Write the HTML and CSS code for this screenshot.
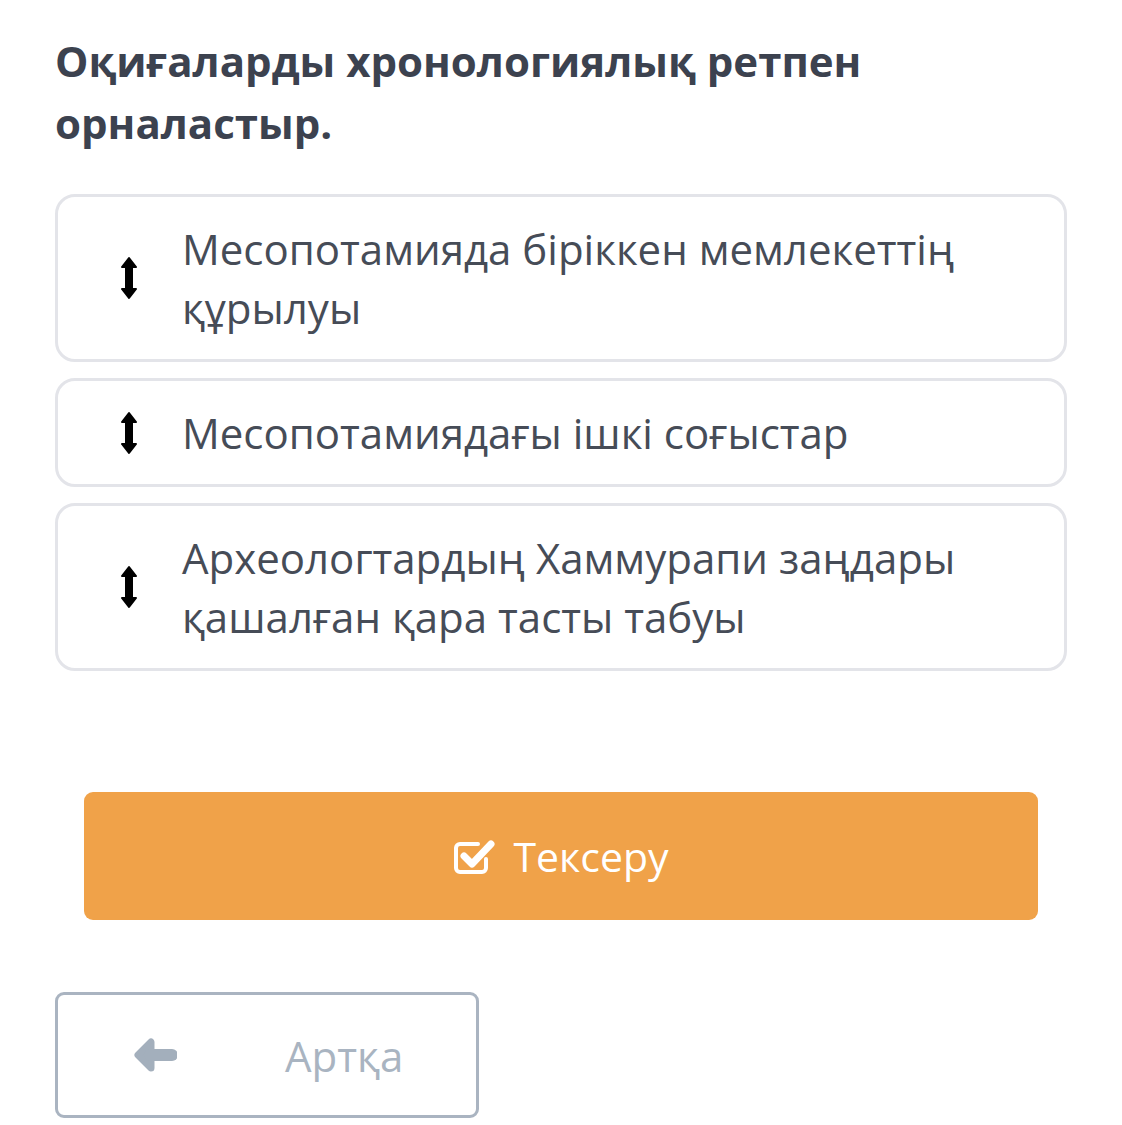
FILE: index.html
```html
<!DOCTYPE html>
<html lang="kk">
<head>
    <meta charset="UTF-8">
    <meta name="viewport" content="width=device-width, initial-scale=1.0">
    <title>Оқиғаларды ретпен орналастыр</title>
    <link rel="stylesheet" href="styles.css">
</head>
<body>
    <div class="container">
        <h1 class="question">Оқиғаларды хронологиялық ретпен орналастыр.</h1>

        <div class="sort-list">
            <div class="sort-item">
                <span class="handle">
                    <svg viewBox="0 0 16 44" width="16" height="44"><path d="M8 2 L15 11 H11 V33 H15 L8 42 L1 33 H5 V11 H1 Z" fill="#000" stroke="#000" stroke-width="2" stroke-linejoin="round"/></svg>
                </span>
                <span class="item-text">Месопотамияда біріккен мемлекеттің құрылуы</span>
            </div>
            <div class="sort-item">
                <span class="handle">
                    <svg viewBox="0 0 16 44" width="16" height="44"><path d="M8 2 L15 11 H11 V33 H15 L8 42 L1 33 H5 V11 H1 Z" fill="#000" stroke="#000" stroke-width="2" stroke-linejoin="round"/></svg>
                </span>
                <span class="item-text">Месопотамиядағы ішкі соғыстар</span>
            </div>
            <div class="sort-item">
                <span class="handle">
                    <svg viewBox="0 0 16 44" width="16" height="44"><path d="M8 2 L15 11 H11 V33 H15 L8 42 L1 33 H5 V11 H1 Z" fill="#000" stroke="#000" stroke-width="2" stroke-linejoin="round"/></svg>
                </span>
                <span class="item-text">Археологтардың Хаммурапи заңдары қашалған қара тасты табуы</span>
            </div>
        </div>

        <button class="btn-check">
            <svg viewBox="0 0 42 38" width="42" height="38">
                <path d="M33 22 V31 a4 4 0 0 1 -4 4 H7 a4 4 0 0 1 -4 -4 V11 a4 4 0 0 1 4 -4 H25" fill="none" stroke="#fff" stroke-width="4" stroke-linecap="round"/>
                <path d="M11 19 L19 27 L38 7" fill="none" stroke="#fff" stroke-width="7" stroke-linecap="round" stroke-linejoin="round"/>
            </svg>
            <span>Тексеру</span>
        </button>

        <button class="btn-back">
            <svg viewBox="0 0 44 36" width="44" height="36">
                <path d="M5 18 L18 5 L18 31 Z" fill="#a3afbc" stroke="#a3afbc" stroke-width="7" stroke-linejoin="round"/>
                <path d="M17 18 H39" stroke="#a3afbc" stroke-width="12" stroke-linecap="round"/>
            </svg>
            <span>Артқа</span>
        </button>
    </div>
</body>
</html>
```

FILE: styles.css
```css
body {
    margin: 0;
    background: #fff;
    font-family: "Open Sans", "Noto Sans", sans-serif;
}
.container {
    padding: 30px 55px 0;
}
.question {
    margin: 0 0 40px;
    font-size: 42px;
    line-height: 62px;
    font-weight: 700;
    color: #3c424f;
    max-width: 880px;
}
.sort-list {
    display: flex;
    flex-direction: column;
    gap: 16px;
}
.sort-item {
    display: flex;
    align-items: center;
    border: 3px solid #e3e4e9;
    border-radius: 20px;
    padding: 22px 40px 22px 0;
}
.handle {
    width: 124px;
    flex-shrink: 0;
    display: flex;
    justify-content: center;
    padding-left: 18px;
    box-sizing: border-box;
}
.handle svg {
    display: block;
}
.item-text {
    font-size: 42px;
    line-height: 59px;
    color: #464c57;
}
.btn-check {
    display: flex;
    align-items: center;
    justify-content: center;
    gap: 18px;
    width: 954px;
    height: 128px;
    margin: 121px 0 0 29px;
    border: none;
    border-radius: 9px;
    background: #f0a249;
    color: #fff;
    font-family: inherit;
    font-size: 41px;
    cursor: pointer;
}
.btn-check svg,
.btn-back svg {
    display: block;
}
.btn-back {
    display: flex;
    align-items: center;
    width: 424px;
    height: 126px;
    margin-top: 72px;
    padding: 0 0 0 75px;
    gap: 108px;
    border: 3px solid #aab4c1;
    border-radius: 9px;
    background: #fff;
    color: #a9b4c1;
    font-family: inherit;
    font-size: 42px;
    cursor: pointer;
}
```
